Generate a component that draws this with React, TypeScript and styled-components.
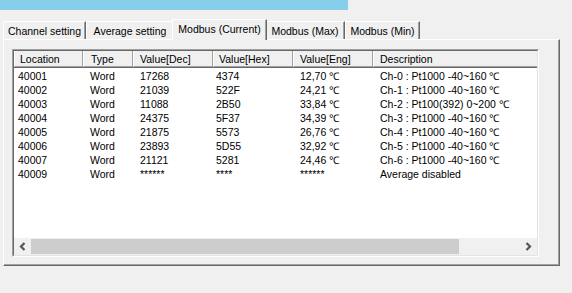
import React from "react";
import styled, { createGlobalStyle } from "styled-components";

const Global = createGlobalStyle`
  html, body { margin: 0; padding: 0; background: #f0f0f0; }
  body {
    width: 572px; height: 293px; overflow: hidden;
    font-family: "Liberation Sans", Arial, sans-serif;
    font-size: 10.5px; color: #000;
  }
`;

const Window = styled.div`
  width: 572px;
  height: 293px;
  display: flex;
  flex-direction: column;
  background: #f0f0f0;
`;

const TopStrip = styled.div`
  width: 348px;
  height: 10px;
  background: #87ceeb;
  flex: none;
`;

const TabStrip = styled.div`
  display: flex;
  align-items: flex-end;
  height: 20px;
  margin-top: 9px;
  padding-left: 3px;
  position: relative;
  z-index: 2;
`;

const Tab = styled.div<{ $w: number; $active?: boolean }>`
  box-sizing: border-box;
  flex: none;
  width: ${(p) => (p.$active ? p.$w + 4 : p.$w)}px;
  height: ${(p) => (p.$active ? 21 : 18)}px;
  margin: ${(p) => (p.$active ? "0 -2px -1px -2px" : "0")};
  border-top: 1px solid #fff;
  border-left: 1px solid #fff;
  border-right: 1px solid #696969;
  box-shadow: inset -1px 0 0 #a0a0a0;
  background: #f0f0f0;
  display: flex;
  align-items: center;
  justify-content: center;
  padding-bottom: ${(p) => (p.$active ? 3 : 0)}px;
  position: relative;
  z-index: ${(p) => (p.$active ? 3 : 1)};
  white-space: nowrap;
  color: #000;
`;

const Panel = styled.div`
  box-sizing: border-box;
  margin-left: 3px;
  width: 557px;
  height: 227px;
  border-top: 1px solid #fff;
  border-left: 1px solid #fff;
  border-right: 1px solid #696969;
  border-bottom: 1px solid #696969;
  box-shadow: inset -1px -1px 0 #a0a0a0;
  padding: 9px 0 0 8px;
  position: relative;
  z-index: 1;
`;

const ListOuter = styled.div`
  box-sizing: border-box;
  width: 527px;
  height: 208px;
  border-top: 1px solid #a0a0a0;
  border-left: 1px solid #a0a0a0;
  border-right: 1px solid #fff;
  border-bottom: 1px solid #fff;
`;

const ListInner = styled.div`
  box-sizing: border-box;
  height: 100%;
  border-top: 1px solid #696969;
  border-left: 1px solid #696969;
  border-right: 1px solid #e3e3e3;
  border-bottom: 1px solid #e3e3e3;
  background: #fff;
  display: flex;
  flex-direction: column;
  overflow: hidden;
`;

const COLS = "69px 50px 80px 80px 80px 165px";

const HeaderRow = styled.div`
  display: grid;
  grid-template-columns: ${COLS};
  height: 17px;
  flex: none;
  background: #f0f0f0;
  border-bottom: 1px solid #696969;
  box-sizing: border-box;
`;

const HeaderCell = styled.div<{ $pad: number }>`
  box-sizing: border-box;
  height: 16px;
  border-left: 1px solid #fff;
  border-right: 1px solid #a0a0a0;
  border-bottom: 1px solid #a0a0a0;
  padding-left: ${(p) => p.$pad - 1}px;
  padding-top: 1px;
  display: flex;
  align-items: center;
  white-space: nowrap;
  overflow: hidden;
`;

const Body = styled.div`
  flex: 1;
  padding-top: 1px;
`;

const Row = styled.div`
  display: grid;
  grid-template-columns: ${COLS};
  height: 14px;
  align-items: center;
`;

const Cell = styled.div<{ $pad: number }>`
  padding-left: ${(p) => p.$pad}px;
  white-space: nowrap;
  overflow: hidden;
  line-height: 14px;
`;

const ScrollBar = styled.div`
  display: flex;
  height: 17px;
  flex: none;
  background: #f0f0f0;
`;

const ArrowButton = styled.div`
  width: 17px;
  height: 17px;
  flex: none;
  display: flex;
  align-items: center;
  justify-content: center;
`;

const Track = styled.div`
  flex: 1;
  display: flex;
  align-items: center;
`;

const Thumb = styled.div`
  width: 428px;
  height: 15px;
  background: #cdcdcd;
`;

const Chevron = ({ dir }: { dir: "left" | "right" }) => (
  <svg width="17" height="17" viewBox="0 0 17 17">
    <polyline
      points={dir === "left" ? "10.5,5 7,8.5 10.5,12" : "6.5,5 10,8.5 6.5,12"}
      fill="none"
      stroke="#555"
      strokeWidth="2.2"
    />
  </svg>
);

const tabs = [
  { label: "Channel setting", w: 83 },
  { label: "Average setting", w: 88 },
  { label: "Modbus (Current)", w: 91, active: true },
  { label: "Modbus (Max)", w: 80 },
  { label: "Modbus (Min)", w: 75 },
];

const headers = ["Location", "Type", "Value[Dec]", "Value[Hex]", "Value[Eng]", "Description"];
const headerPad = [6, 8, 7, 6, 7, 7];
const cellPad = [4, 7, 7, 3, 7, 7];

const rows: string[][] = [
  ["40001", "Word", "17268", "4374", "12,70 ℃", "Ch-0 : Pt1000 -40~160 ℃"],
  ["40002", "Word", "21039", "522F", "24,21 ℃", "Ch-1 : Pt1000 -40~160 ℃"],
  ["40003", "Word", "11088", "2B50", "33,84 ℃", "Ch-2 : Pt100(392) 0~200 ℃"],
  ["40004", "Word", "24375", "5F37", "34,39 ℃", "Ch-3 : Pt1000 -40~160 ℃"],
  ["40005", "Word", "21875", "5573", "26,76 ℃", "Ch-4 : Pt1000 -40~160 ℃"],
  ["40006", "Word", "23893", "5D55", "32,92 ℃", "Ch-5 : Pt1000 -40~160 ℃"],
  ["40007", "Word", "21121", "5281", "24,46 ℃", "Ch-6 : Pt1000 -40~160 ℃"],
  ["40009", "Word", "******", "****", "******", "Average disabled"],
];

export default function App() {
  return (
    <Window>
      <Global />
      <TopStrip />
      <TabStrip>
        {tabs.map((t) => (
          <Tab key={t.label} $w={t.w} $active={t.active}>
            {t.label}
          </Tab>
        ))}
      </TabStrip>
      <Panel>
        <ListOuter>
          <ListInner>
            <HeaderRow>
              {headers.map((h, i) => (
                <HeaderCell key={h} $pad={headerPad[i]}>
                  {h}
                </HeaderCell>
              ))}
            </HeaderRow>
            <Body>
              {rows.map((r) => (
                <Row key={r[0]}>
                  {r.map((c, i) => (
                    <Cell key={i} $pad={cellPad[i]}>
                      {c}
                    </Cell>
                  ))}
                </Row>
              ))}
            </Body>
            <ScrollBar>
              <ArrowButton>
                <Chevron dir="left" />
              </ArrowButton>
              <Track>
                <Thumb />
              </Track>
              <ArrowButton>
                <Chevron dir="right" />
              </ArrowButton>
            </ScrollBar>
          </ListInner>
        </ListOuter>
      </Panel>
    </Window>
  );
}
